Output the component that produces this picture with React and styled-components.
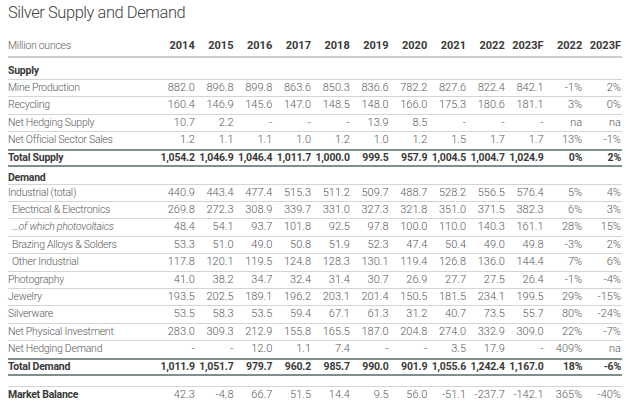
import React from 'react';
import styled, { createGlobalStyle } from 'styled-components';

const GlobalStyle = createGlobalStyle`
  body {
    margin: 0;
    background: #fff;
  }
`;

const years = ['2014', '2015', '2016', '2017', '2018', '2019', '2020', '2021', '2022', '2023F', '2022', '2023F'];

const supply = [
  { label: 'Mine Production', values: ['882.0', '896.8', '899.8', '863.6', '850.3', '836.6', '782.2', '827.6', '822.4', '842.1', '-1%', '2%'] },
  { label: 'Recycling', values: ['160.4', '146.9', '145.6', '147.0', '148.5', '148.0', '166.0', '175.3', '180.6', '181.1', '3%', '0%'] },
  { label: 'Net Hedging Supply', values: ['10.7', '2.2', '-', '-', '-', '13.9', '8.5', '-', '-', '-', 'na', 'na'] },
  { label: 'Net Official Sector Sales', values: ['1.2', '1.1', '1.1', '1.0', '1.2', '1.0', '1.2', '1.5', '1.7', '1.7', '13%', '-1%'], beforeTotal: true },
];
const totalSupply = ['1,054.2', '1,046.9', '1,046.4', '1,011.7', '1,000.0', '999.5', '957.9', '1,004.5', '1,004.7', '1,024.9', '0%', '2%'];

const demand = [
  { label: 'Industrial (total)', values: ['440.9', '443.4', '477.4', '515.3', '511.2', '509.7', '488.7', '528.2', '556.5', '576.4', '5%', '4%'] },
  { label: 'Electrical & Electronics', indent: true, values: ['269.8', '272.3', '308.9', '339.7', '331.0', '327.3', '321.8', '351.0', '371.5', '382.3', '6%', '3%'] },
  { label: '...of which photovoltaics', indent: true, italic: true, values: ['48.4', '54.1', '93.7', '101.8', '92.5', '97.8', '100.0', '110.0', '140.3', '161.1', '28%', '15%'] },
  { label: 'Brazing Alloys & Solders', indent: true, values: ['53.3', '51.0', '49.0', '50.8', '51.9', '52.3', '47.4', '50.4', '49.0', '49.8', '-3%', '2%'] },
  { label: 'Other Industrial', indent: true, values: ['117.8', '120.1', '119.5', '124.8', '128.3', '130.1', '119.4', '126.8', '136.0', '144.4', '7%', '6%'] },
  { label: 'Photography', values: ['41.0', '38.2', '34.7', '32.4', '31.4', '30.7', '26.9', '27.7', '27.5', '26.4', '-1%', '-4%'] },
  { label: 'Jewelry', values: ['193.5', '202.5', '189.1', '196.2', '203.1', '201.4', '150.5', '181.5', '234.1', '199.5', '29%', '-15%'] },
  { label: 'Silverware', values: ['53.5', '58.3', '53.5', '59.4', '67.1', '61.3', '31.2', '40.7', '73.5', '55.7', '80%', '-24%'] },
  { label: 'Net Physical Investment', values: ['283.0', '309.3', '212.9', '155.8', '165.5', '187.0', '204.8', '274.0', '332.9', '309.0', '22%', '-7%'] },
  { label: 'Net Hedging Demand', values: ['-', '-', '12.0', '1.1', '7.4', '-', '-', '3.5', '17.9', '-', '409%', 'na'], beforeTotal: true },
];
const totalDemand = ['1,011.9', '1,051.7', '979.7', '960.2', '985.7', '990.0', '901.9', '1,055.6', '1,242.4', '1,167.0', '18%', '-6%'];
const balance = ['42.3', '-4.8', '66.7', '51.5', '14.4', '9.5', '56.0', '-51.1', '-237.7', '-142.1', '365%', '-40%'];

const Page = styled.div`
  padding: 0 4px 0 8px;
  font-family: Roboto, 'Liberation Sans', sans-serif;
  color: #5a5a5a;
`;

const Title = styled.h1`
  margin: 0;
  padding-top: 2px;
  font-size: 16.5px;
  line-height: 22px;
  font-weight: 300;
  letter-spacing: -0.45px;
  color: #444;
`;

const Table = styled.table`
  width: 614px;
  margin-top: 10px;
  border-collapse: collapse;
  table-layout: fixed;
  font-size: 11px;
  font-weight: 300;

  td,
  th {
    padding: 0;
  }
`;

const HeadCell = styled.th`
  height: 22px;
  padding-right: 1px !important;
  text-align: ${(p) => (p.$left ? 'left' : 'right')};
  font-size: ${(p) => (p.$left ? '10.5px' : '11px')};
  letter-spacing: ${(p) => (p.$left ? '-0.25px' : '0')};
  font-weight: ${(p) => (p.$left ? 300 : 700)};
  color: ${(p) => (p.$left ? '#5a5a5a' : '#3a3a3a')};
  border-bottom: 2px solid #cccccc;
  vertical-align: middle;
`;

const Row = styled.tr`
  line-height: ${(p) => (p.$kind === 'total' ? '14px' : '16.4px')};
  border-bottom: ${(p) => {
    if (p.$kind === 'total' || p.$beforeTotal) return '2px solid #7f8e8f';
    return '1px solid #d4d4d4';
  }};
`;

const Label = styled.td`
  padding-left: ${(p) => (p.$indent ? '4px' : '0')} !important;
  text-align: left;
  white-space: nowrap;
  font-size: 10.5px;
  letter-spacing: -0.25px;
  font-weight: ${(p) => (p.$kind === 'item' ? 300 : 700)};
  font-style: ${(p) => (p.$italic ? 'italic' : 'normal')};
  color: ${(p) => (p.$kind === 'item' ? '#5a5a5a' : '#3a3a3a')};
  vertical-align: middle;
`;

const SectionLabel = styled.td`
  height: ${(p) => p.$h}px;
  padding-bottom: ${(p) => p.$pb}px !important;
  line-height: 13px;
  font-size: 10.5px;
  letter-spacing: -0.25px;
  font-weight: 700;
  color: #3a3a3a;
  vertical-align: bottom;
`;

const Spacer = styled.td`
  height: 10px;
`;

const Num = styled.td`
  padding-right: 1px !important;
  text-align: right;
  white-space: nowrap;
  font-size: ${(p) => (p.$bold ? '10.5px' : '11px')};
  letter-spacing: ${(p) => (p.$bold ? '-0.2px' : '0')};
  font-weight: ${(p) => (p.$bold ? 700 : 300)};
  color: ${(p) => (p.$bold ? '#3a3a3a' : '#5a5a5a')};
  vertical-align: middle;
`;

const SectionRow = ({ label, h, pb }) => (
  <Row $kind="section">
    <SectionLabel $h={h} $pb={pb} colSpan={13}>
      {label}
    </SectionLabel>
  </Row>
);

const DataRow = ({ row, kind = 'item' }) => (
  <Row $kind={kind} $beforeTotal={row.beforeTotal}>
    <Label $kind={kind} $indent={row.indent} $italic={row.italic}>
      {row.label}
    </Label>
    {row.values.map((v, i) => (
      <Num key={i} $bold={kind === 'total'}>
        {v}
      </Num>
    ))}
  </Row>
);

export default function App() {
  return (
    <>
      <GlobalStyle />
      <Page>
        <Title>Silver Supply and Demand</Title>
        <Table>
          <colgroup>
            <col style={{ width: 149 }} />
            {years.map((_, i) => (
              <col key={i} />
            ))}
          </colgroup>
          <thead>
            <tr>
              <HeadCell $left>Million ounces</HeadCell>
              {years.map((y, i) => (
                <HeadCell key={i}>{y}</HeadCell>
              ))}
            </tr>
          </thead>
          <tbody>
            <SectionRow label="Supply" h={19} pb={2} />
            {supply.map((r) => (
              <DataRow key={r.label} row={r} />
            ))}
            <DataRow row={{ label: 'Total Supply', values: totalSupply }} kind="total" />
            <SectionRow label="Demand" h={17} pb={0} />
            {demand.map((r) => (
              <DataRow key={r.label} row={r} />
            ))}
            <DataRow row={{ label: 'Total Demand', values: totalDemand }} kind="total" />
            <Row $kind="spacer">
              <Spacer colSpan={13} />
            </Row>
            <DataRow row={{ label: 'Market Balance', values: balance }} kind="balance" />
          </tbody>
        </Table>
      </Page>
    </>
  );
}
